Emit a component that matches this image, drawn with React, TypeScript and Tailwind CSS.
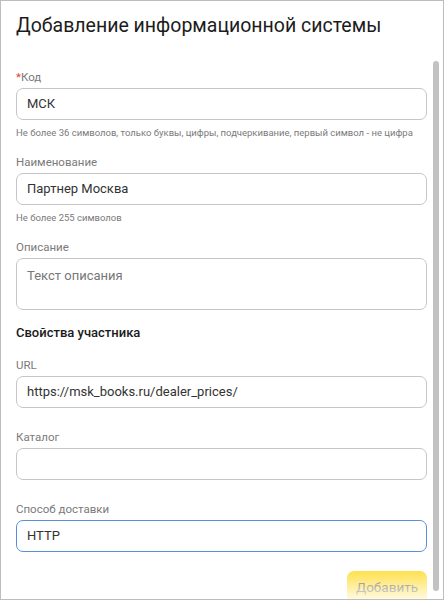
import React from "react";

function Field({
  label,
  value,
  placeholder,
  hint,
  required,
  focused,
  multiline,
  className,
}: {
  label: string;
  value?: string;
  placeholder?: string;
  hint?: string;
  required?: boolean;
  focused?: boolean;
  multiline?: boolean;
  className?: string;
}) {
  return (
    <div className={className}>
      <div className="mb-[3px] text-[11.5px] leading-[16px] text-[#7a7a7a]">
        {required && <span className="text-[#e53935]">*</span>}
        {label}
      </div>
      <div
        className={
          "flex rounded-[7px] border bg-white px-[10px] text-[13px] text-[#333] " +
          (multiline ? "h-[52px] items-start pt-[7px] " : "h-[32px] items-center ") +
          (focused ? "border-[#5a8fd6]" : "border-[#c6c6c6]")
        }
      >
        {value ? <span>{value}</span> : <span className="text-[#777]">{placeholder}</span>}
      </div>
      {hint && <div className="mt-[6px] whitespace-nowrap text-[9.5px] leading-[14px] text-[#7a7a7a]">{hint}</div>}
    </div>
  );
}

export default function App() {
  return (
    <div
      className="relative h-[600px] w-[444px] overflow-hidden border border-[#bdbdbd] bg-white"
      style={{ fontFamily: "Roboto, 'Noto Sans', sans-serif" }}
    >
      <div className="pl-[15px] pr-[16px] pt-[11px]">
        <h1 className="text-[19.5px] font-normal leading-[28px] text-[#1c1c1c]">Добавление информационной системы</h1>

        <div className="pt-[29px]">
          <Field
            label="Код"
            required
            value="МСК"
            hint="Не более 36 символов, только буквы, цифры, подчеркивание, первый символ - не цифра"
          />
          <Field className="mt-[14px]" label="Наименование" value="Партнер Москва" hint="Не более 255 символов" />
          <Field className="mt-[14px]" label="Описание" placeholder="Текст описания" multiline />

          <div className="mt-[13px] text-[13px] font-medium leading-[20px] text-[#1a1a1a]">Свойства участника</div>

          <Field className="mt-[14px]" label="URL" value="https://msk_books.ru/dealer_prices/" />
          <Field className="mt-[21px]" label="Каталог" />
          <Field className="mt-[21px]" label="Способ доставки" value="HTTP" focused />

          <div className="mt-[19px] flex justify-end">
            <button
              type="button"
              className="h-[32px] w-[80px] rounded-[7px] bg-[#ffdb2e] text-[13.5px] text-[#555]"
            >
              Добавить
            </button>
          </div>
        </div>
      </div>

      {/* fade at the bottom of the scroll area */}
      <div className="pointer-events-none absolute bottom-0 left-0 right-0 h-[34px] bg-gradient-to-b from-white/0 to-white/85" />

      {/* scrollbar thumb */}
      <div className="absolute right-[4px] top-[60px] h-[530px] w-[6px] rounded-full bg-[#c2c2c2]" />
    </div>
  );
}
